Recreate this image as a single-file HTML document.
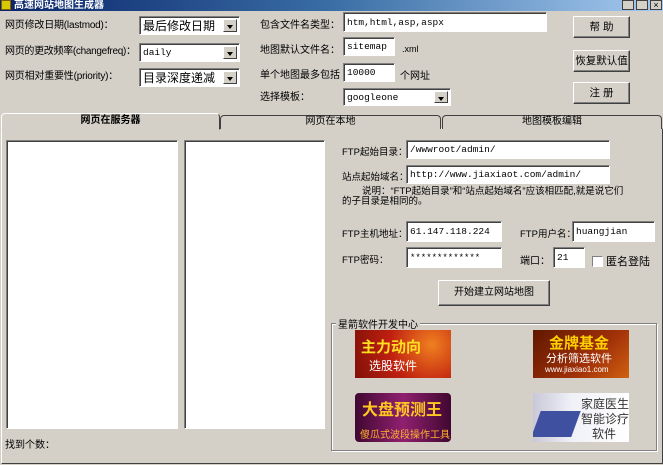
<!DOCTYPE html>
<html><head><meta charset="utf-8"><style>
*{margin:0;padding:0;box-sizing:border-box}
body{width:663px;height:465px;background:#d4d0c8;position:relative;overflow:hidden;font-family:"Liberation Sans","Noto Sans CJK SC","WenQuanYi Zen Hei",sans-serif;font-size:10px;color:#000}
.a{position:absolute;white-space:nowrap}
.in{position:absolute;background:#fff;border:1px solid;border-color:#808080 #fff #fff #808080;box-shadow:inset 1px 1px 0 #404040;font-family:"Liberation Mono","Noto Sans CJK SC",monospace;font-size:9.5px;padding:0 3px;white-space:nowrap;overflow:hidden;display:flex;align-items:center}
.dd{position:absolute;right:2px;top:2px;bottom:2px;width:14px;background:#d4d0c8;border:1px solid;border-color:#fff #404040 #404040 #fff}
.dd:after{content:"";position:absolute;left:3px;top:5px;border:3px solid transparent;border-top:4px solid #000}
.btn{position:absolute;background:#d4d0c8;border:1px solid;border-color:#fff #404040 #404040 #fff;box-shadow:inset -1px -1px 0 #808080;text-align:center;font-size:10.5px;white-space:nowrap}
.img{position:absolute;overflow:hidden}
</style></head><body>
<div class="a" style="left:0;top:0;width:663px;height:11px;background:linear-gradient(90deg,#0a246a,#3a6ea5 50%,#a6caf0)"></div>
<div class="a" style="left:1px;top:0;width:10px;height:10px;background:#d8c800;border:1px solid #806000"></div>
<div class="a" style="left:14px;top:0;color:#fff;font-weight:bold;font-size:10px;line-height:11px">高速网站地图生成器</div>
<div class="a" style="left:622px;top:0;width:12px;height:10px;background:#d4d0c8;border:1px solid #404040"></div>
<div class="a" style="left:636px;top:0;width:12px;height:10px;background:#d4d0c8;border:1px solid #404040"></div>
<div class="a" style="left:650px;top:0;width:12px;height:10px;background:#d4d0c8;border:1px solid #404040;font-size:9px;line-height:8px;text-align:center">×</div>

<div class="a" style="left:5px;top:16px;letter-spacing:-0.2px">网页修改日期(lastmod)：</div>
<div class="a" style="left:5px;top:42px;letter-spacing:-0.3px">网页的更改频率(changefreq)：</div>
<div class="a" style="left:5px;top:67px;letter-spacing:-0.2px">网页相对重要性(priority)：</div>
<div class="in" style="left:139px;top:16px;width:101px;height:19px;font-family:'Noto Sans CJK SC',sans-serif;font-size:12px">最后修改日期<div class="dd"></div></div>
<div class="in" style="left:139px;top:43px;width:101px;height:19px">daily<div class="dd"></div></div>
<div class="in" style="left:139px;top:68px;width:101px;height:19px;font-family:'Noto Sans CJK SC',sans-serif;font-size:12px">目录深度递减<div class="dd"></div></div>

<div class="a" style="left:260px;top:16px">包含文件名类型：</div>
<div class="a" style="left:260px;top:41px">地图默认文件名：</div>
<div class="a" style="left:260px;top:66px">单个地图最多包括</div>
<div class="a" style="left:260px;top:88px">选择模板：</div>
<div class="in" style="left:343px;top:12px;width:204px;height:20px">htm,html,asp,aspx</div>
<div class="in" style="left:343px;top:37px;width:52px;height:19px">sitemap</div>
<div class="a" style="left:402px;top:44px;font-size:9px">.xml</div>
<div class="in" style="left:343px;top:63px;width:52px;height:19px">10000</div>
<div class="a" style="left:400px;top:67px">个网址</div>
<div class="in" style="left:343px;top:88px;width:108px;height:18px">googleone<div class="dd"></div></div>

<div class="btn" style="left:573px;top:16px;width:57px;height:22px;line-height:20px">帮 助</div>
<div class="btn" style="left:573px;top:50px;width:57px;height:22px;line-height:20px">恢复默认值</div>
<div class="btn" style="left:573px;top:82px;width:57px;height:22px;line-height:20px">注 册</div>

<div class="a" style="left:1px;top:128px;width:662px;height:336px;border:1px solid;border-color:#fff #404040 #404040 #fff"></div>
<div class="a" style="left:220px;top:115px;width:221px;height:14px;border:1px solid #404040;border-bottom:none;border-radius:4px 4px 0 0;text-align:center;line-height:12px;background:#d4d0c8">网页在本地</div>
<div class="a" style="left:442px;top:115px;width:220px;height:14px;border:1px solid #404040;border-bottom:none;border-radius:4px 4px 0 0;text-align:center;line-height:12px;background:#d4d0c8">地图模板编辑</div>
<div class="a" style="left:1px;top:113px;width:219px;height:17px;border:1px solid;border-color:#fff #404040 transparent #fff;border-radius:4px 4px 0 0;text-align:center;line-height:14px;font-weight:bold;background:#d4d0c8">网页在服务器</div>

<div class="in" style="left:6px;top:140px;width:172px;height:289px"></div>
<div class="in" style="left:184px;top:140px;width:141px;height:289px"></div>
<div class="a" style="left:5px;top:436px">找到个数：</div>

<div class="a" style="left:342px;top:144px;font-size:9.5px">FTP起始目录：</div>
<div class="in" style="left:406px;top:140px;width:204px;height:19px">/wwwroot/admin/</div>
<div class="a" style="left:342px;top:169px;font-size:9.5px">站点起始域名：</div>
<div class="in" style="left:406px;top:165px;width:204px;height:19px">http://www.jiaxiaot.com/admin/</div>
<div class="a" style="left:362px;top:187px;font-size:9.5px;line-height:10px">说明：“FTP起始目录”和“站点起始域名”应该相匹配,就是说它们</div>
<div class="a" style="left:342px;top:197px;font-size:9.5px;line-height:10px">的子目录是相同的。</div>
<div class="a" style="left:342px;top:226px;font-size:9.5px">FTP主机地址：</div>
<div class="in" style="left:406px;top:221px;width:96px;height:21px">61.147.118.224</div>
<div class="a" style="left:520px;top:226px;font-size:9.5px">FTP用户名：</div>
<div class="in" style="left:572px;top:221px;width:83px;height:21px">huangjian</div>
<div class="a" style="left:342px;top:252px;font-size:9.5px">FTP密码：</div>
<div class="in" style="left:406px;top:247px;width:96px;height:21px;font-size:9px">*************</div>
<div class="a" style="left:520px;top:252px">端口：</div>
<div class="in" style="left:553px;top:247px;width:32px;height:21px">21</div>
<div class="a" style="left:592px;top:256px;width:11px;height:11px;background:#fff;border:1px solid;border-color:#808080 #fff #fff #808080"></div>
<div class="a" style="left:606px;top:253px;font-size:11px">匿名登陆</div>
<div class="btn" style="left:438px;top:280px;width:112px;height:26px;line-height:24px;font-size:10px">开始建立网站地图</div>

<div class="a" style="left:331px;top:323px;width:326px;height:128px;border:1px solid #808080;box-shadow:1px 1px 0 #fff,inset 1px 1px 0 #fff"></div>
<div class="a" style="left:336px;top:316px;background:#d4d0c8;padding:0 2px">星箭软件开发中心</div>

<div class="img" style="left:355px;top:330px;width:96px;height:48px;background:radial-gradient(circle at 80% 30%,#f08020,#c02010 50%,#801008)">
<div class="a" style="left:6px;top:6px;color:#ffe020;font-weight:bold;font-size:15px">主力动向</div>
<div class="a" style="left:14px;top:27px;color:#fff;font-size:12px">选股软件</div></div>
<div class="img" style="left:533px;top:330px;width:96px;height:48px;background:linear-gradient(135deg,#601800,#a03008 60%,#d06010)">
<div class="a" style="left:16px;top:2px;color:#ffd000;font-weight:bold;font-size:15px">金牌基金</div>
<div class="a" style="left:13px;top:20px;color:#fff;font-size:11px">分析筛选软件</div>
<div class="a" style="left:12px;top:35px;color:#fff;font-size:8px">www.jiaxiao1.com</div></div>
<div class="img" style="left:355px;top:393px;width:96px;height:49px;border-radius:4px;background:linear-gradient(90deg,#400830,#902070 50%,#400830)">
<div class="a" style="left:7px;top:3px;color:#ffc820;font-weight:bold;font-size:16px">大盘预测王</div>
<div class="a" style="left:5px;top:33px;color:#ffb030;font-size:10px">傻瓜式波段操作工具</div></div>
<div class="img" style="left:533px;top:393px;width:96px;height:49px;background:linear-gradient(90deg,#c8c8d8,#f0f0f8 40%,#fff)">
<div class="a" style="left:3px;top:18px;width:40px;height:26px;background:#4050a0;transform:skewX(-20deg)"></div>
<div class="a" style="left:48px;top:2px;color:#333;font-size:12px">家庭医生</div>
<div class="a" style="left:48px;top:17px;color:#333;font-size:12px">智能诊疗</div>
<div class="a" style="left:59px;top:32px;color:#333;font-size:12px">软件</div></div>
</body></html>
